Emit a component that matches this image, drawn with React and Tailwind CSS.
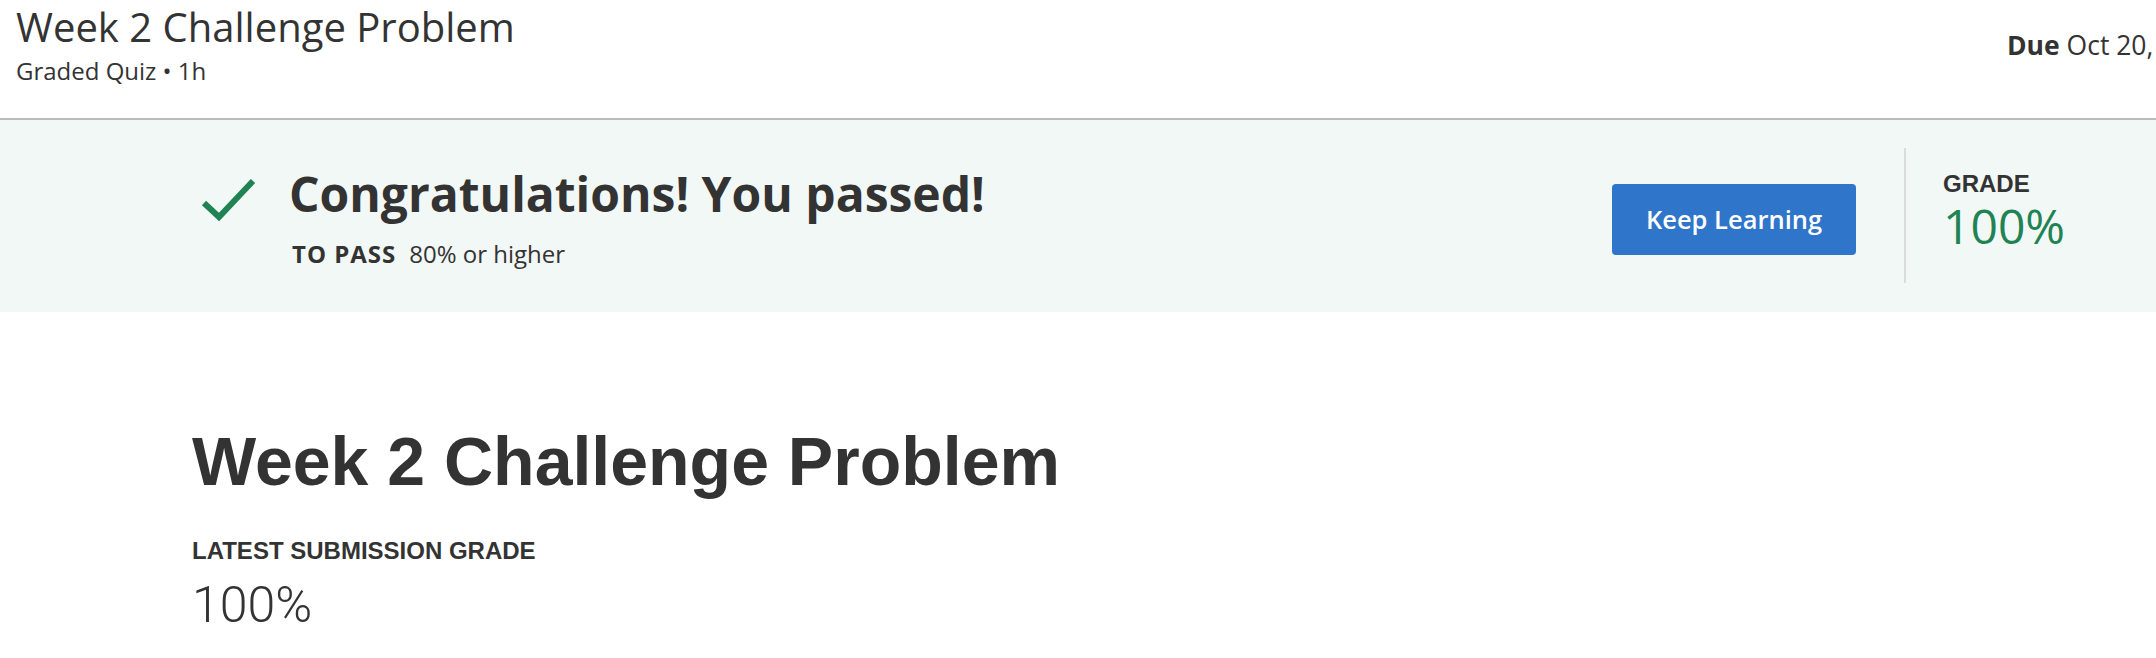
import React from "react";

export default function App() {
  return (
    <div className="w-[2156px] h-[658px] overflow-hidden bg-white text-[#333333] font-['Open_Sans',sans-serif]">
      {/* Header */}
      <header className="h-[120px] border-b-2 border-[#bababa] flex">
        <div className="flex-1 pl-4 pt-[3px]">
          <h1 className="text-[40px] leading-[48px] font-normal">Week 2 Challenge Problem</h1>
          <div className="mt-[4px] text-[24px] leading-[32px]">Graded Quiz • 1h</div>
        </div>
        <div className="w-[149px] shrink-0 overflow-hidden whitespace-nowrap pt-[27px] text-[26.5px] leading-[36px]">
          <span className="font-bold">Due</span> Oct 20, 11:59 PM PDT
        </div>
      </header>

      {/* Banner */}
      <section className="h-[192px] bg-[#f2f8f6] flex items-start">
        <div className="flex items-start pl-[199px]">
          <svg className="mt-[56px] w-[60px] h-[48px] shrink-0" viewBox="0 0 60 48" fill="none">
            <polyline points="5,27 20,41 54,5" stroke="#1f8354" strokeWidth="6" strokeLinejoin="miter" />
          </svg>
          <div className="ml-[30px] mt-[45px]">
            <div className="text-[48px] leading-[58px] font-bold">Congratulations! You passed!</div>
            <div className="mt-[16px] ml-[3px] flex items-baseline text-[24px] leading-[30px]">
              <span className="font-bold tracking-[1px]">TO PASS</span>
              <span className="ml-[13px]">80% or higher</span>
            </div>
          </div>
        </div>
        <div className="ml-auto flex items-start">
          <button className="mt-[64px] w-[244px] h-[71px] rounded-[4px] bg-[#2f75c9] text-white text-[25.5px] font-semibold">
            Keep Learning
          </button>
          <div className="ml-[48px] mt-[28px] w-[2px] h-[135px] bg-[#dcdcdc]" />
          <div className="w-[250px] pl-[37px] mt-[50px]">
            <div className="font-['Liberation_Sans',Arial,sans-serif] font-bold text-[24px] leading-[28px] text-[#333333]">GRADE</div>
            <div className="mt-[2px] text-[48px] leading-[52px] text-[#1f8354]">100%</div>
          </div>
        </div>
      </section>

      {/* Main */}
      <main className="pl-[192px] pt-[110px]">
        <h2 className="font-['Liberation_Sans',Arial,sans-serif] font-bold text-[68px] leading-[78px]">Week 2 Challenge Problem</h2>
        <div className="mt-[37px] font-['Liberation_Sans',Arial,sans-serif] font-bold text-[24px] leading-[28px]">LATEST SUBMISSION GRADE</div>
        <div className="mt-[10px] font-['Roboto',sans-serif] font-light text-[50px] leading-[60px]">100%</div>
      </main>
    </div>
  );
}
